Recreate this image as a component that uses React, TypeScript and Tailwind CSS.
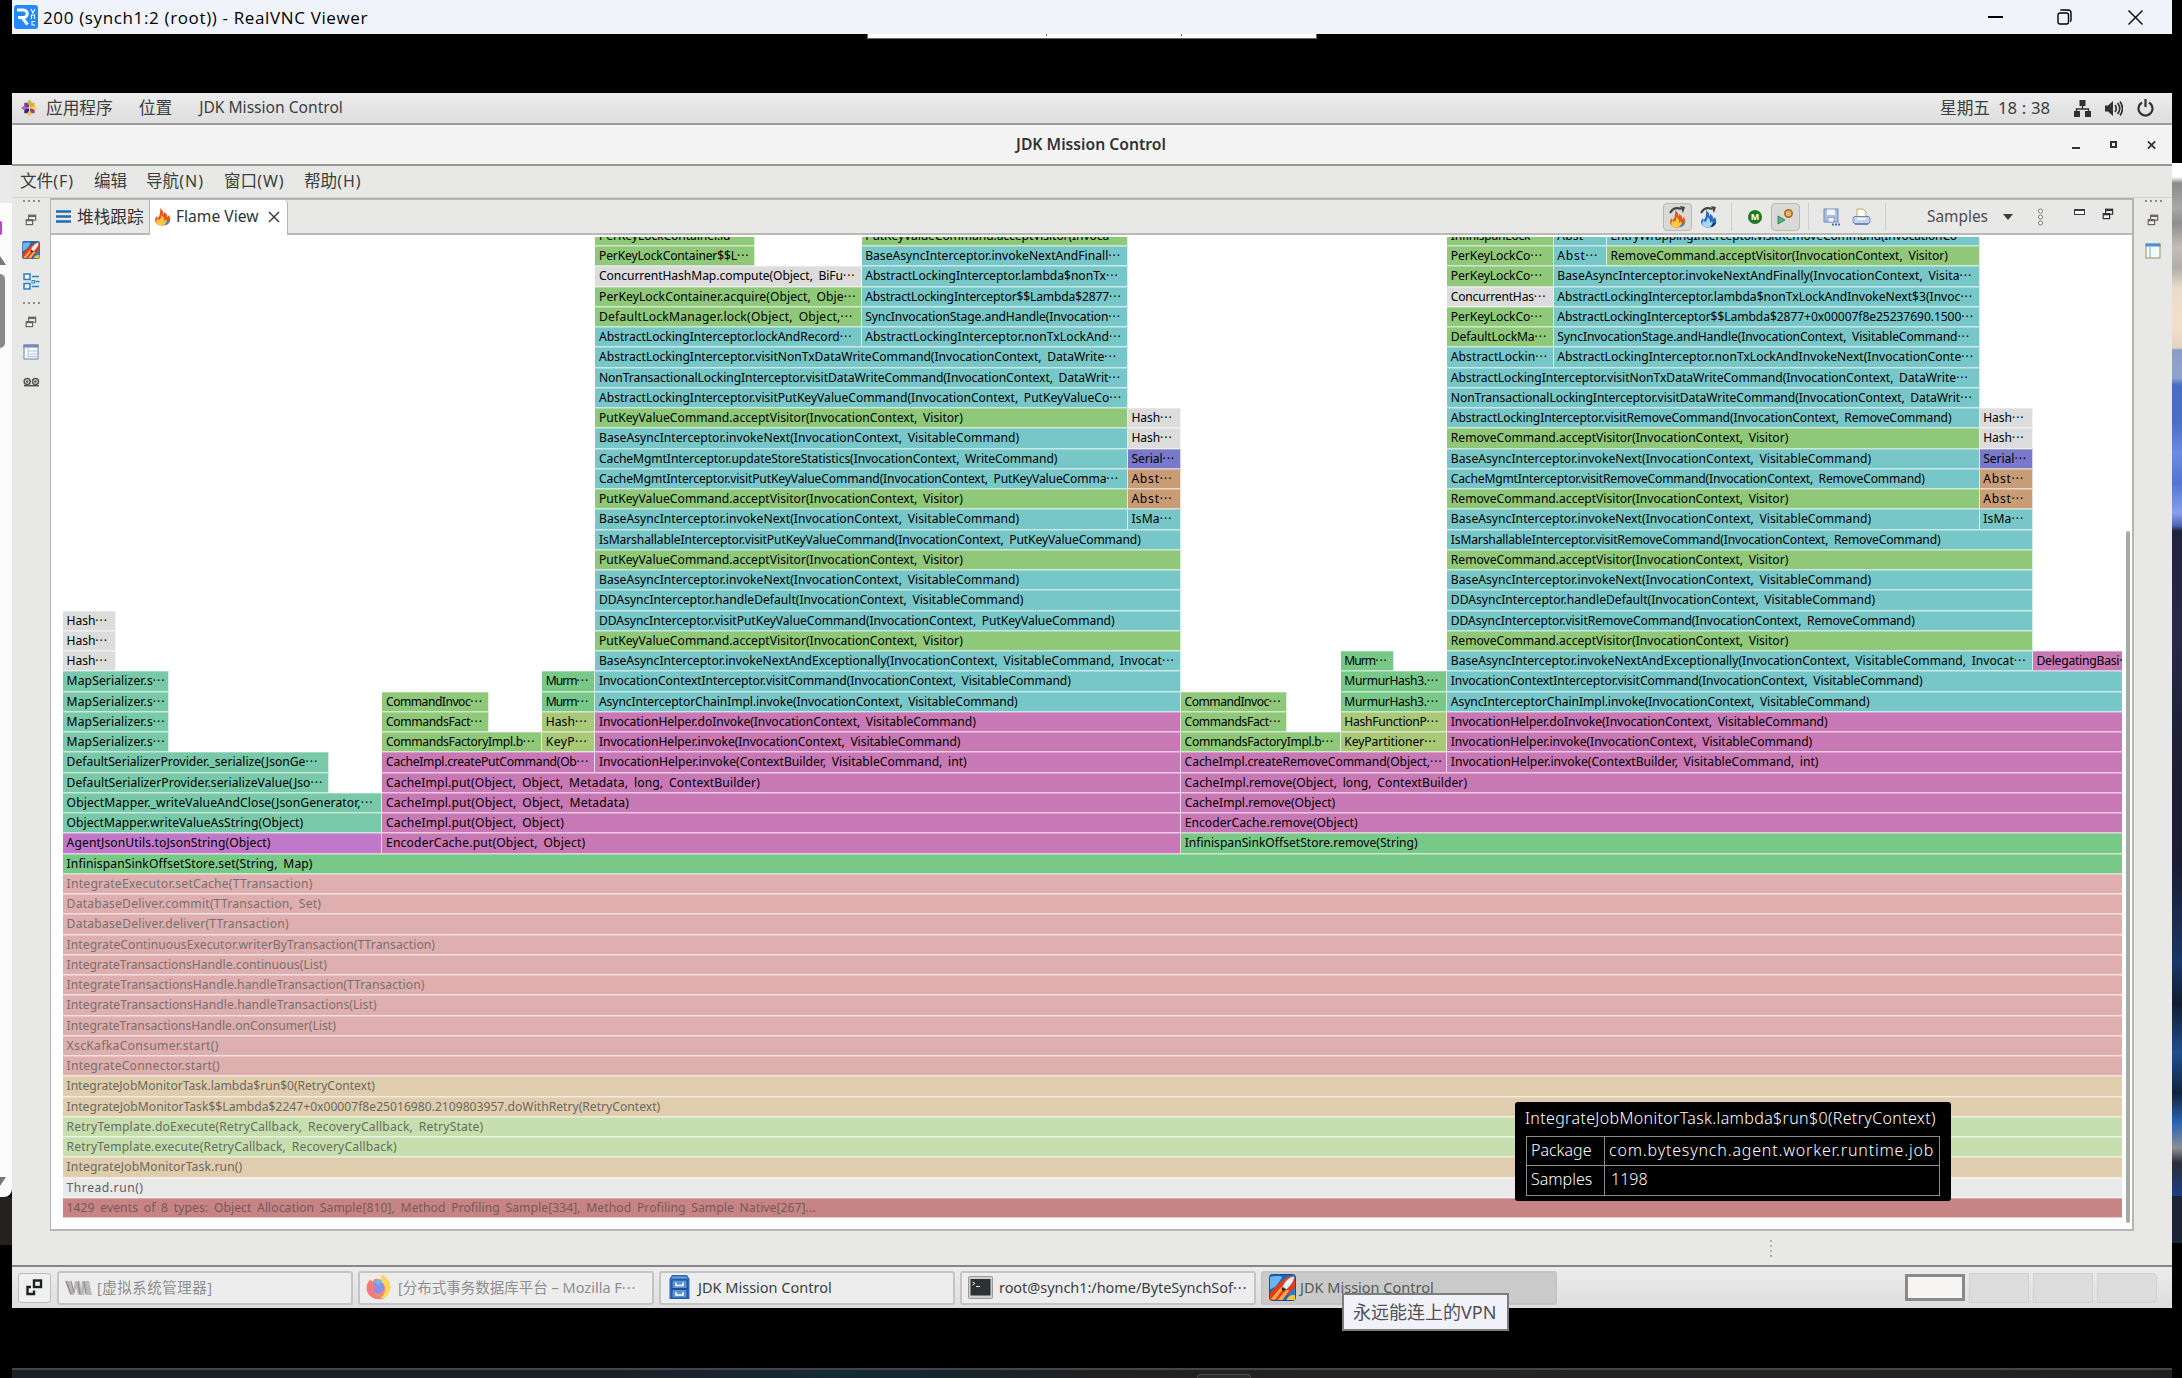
import React from 'react';

const UNIT = 53.24;

const tone = {
  g: 'bg-[#8ec878] text-black',
  t: 'bg-[#78c7c8] text-black',
  y: 'bg-[#dcdcdc] text-black',
  s: 'bg-[#7a78c8] text-black',
  o: 'bg-[#c89c74] text-black',
  m: 'bg-[#c878b4] text-black',
  n: 'bg-[#78c888] text-black',
  e: 'bg-[#78c8aa] text-black',
  l: 'bg-[#a9c878] text-black',
  v: 'bg-[#c278c8] text-black',
  P: 'bg-[#dfaeae] text-[#767070]',
  T: 'bg-[#dfcdae] text-[#6c6860]',
  G: 'bg-[#c7dfae] text-[#666c60]',
  W: 'bg-[#e9e9e9] text-[#606060]',
  R: 'bg-[#c88484] text-[#735a5a]',
} as const;

type Tone = keyof typeof tone;
// start column, column span, tone, label, label width in pixels
type Cell = [number, number, Tone, string, number];

const END = 40;
const full = (t: Tone, s: string, w: number): Cell[] => [[0, END, t, s, w]];

const PUT_ACCEPT = 'PutKeyValueCommand.acceptVisitor(InvocationContext, Visitor)';
const REMOVE_ACCEPT = 'RemoveCommand.acceptVisitor(InvocationContext, Visitor)';
const INVOKE_NEXT = 'BaseAsyncInterceptor.invokeNext(InvocationContext, VisitableCommand)';
const HANDLE_DEFAULT = 'DDAsyncInterceptor.handleDefault(InvocationContext, VisitableCommand)';
const EXCEPTIONALLY = 'BaseAsyncInterceptor.invokeNextAndExceptionally(InvocationContext, VisitableCommand, Invocat…';
const NON_TX = 'AbstractLockingInterceptor.visitNonTxDataWriteCommand(InvocationContext, DataWrite…';
const NON_TRANS = 'NonTransactionalLockingInterceptor.visitDataWriteCommand(InvocationContext, DataWrit…';
const VISIT = 'InvocationContextInterceptor.visitCommand(InvocationContext, VisitableCommand)';
const CHAIN = 'AsyncInterceptorChainImpl.invoke(InvocationContext, VisitableCommand)';
const DO_INVOKE = 'InvocationHelper.doInvoke(InvocationContext, VisitableCommand)';
const INVOKE = 'InvocationHelper.invoke(InvocationContext, VisitableCommand)';
const INVOKE_BUILDER = 'InvocationHelper.invoke(ContextBuilder, VisitableCommand, int)';

const rows: Cell[][] = [
  [
    [10, 3, 'g', 'PerKeyLockContainer.id', 131.500],
    [15, 5, 'g', 'PutKeyValueCommand.acceptVisitor(Invoca', 244],
    [26, 2, 'g', 'InfinispanLock', 79.500],
    [28, 1, 't', 'Abst', 26],
    [29, 7, 't', 'EntryWrappingInterceptor.visitRemoveCommand(InvocationCo', 346.500],
  ],
  [
    [10, 3, 'g', 'PerKeyLockContainer$$L…', 150.6],
    [15, 5, 't', 'BaseAsyncInterceptor.invokeNextAndFinall…', 255.8],
    [26, 2, 'g', 'PerKeyLockCo…', 92.1],
    [28, 1, 't', 'Abst…', 41],
    [29, 7, 'g', REMOVE_ACCEPT, 337.500],
  ],
  [
    [10, 5, 'y', 'ConcurrentHashMap.compute(Object, BiFu…', 256.6],
    [15, 5, 't', 'AbstractLockingInterceptor.lambda$nonTx…', 253.500],
    [26, 2, 'g', 'PerKeyLockCo…', 92.1],
    [28, 8, 't', 'BaseAsyncInterceptor.invokeNextAndFinally(InvocationContext, Visita…', 415],
  ],
  [
    [10, 5, 'g', 'PerKeyLockContainer.acquire(Object, Obje…', 257.4],
    [15, 5, 't', 'AbstractLockingInterceptor$$Lambda$2877…', 256.6],
    [26, 2, 'y', 'ConcurrentHas…', 95.7],
    [28, 8, 't', 'AbstractLockingInterceptor.lambda$nonTxLockAndInvokeNext$3(Invoc…', 415.8],
  ],
  [
    [10, 5, 'g', 'DefaultLockManager.lock(Object, Object,…', 254.2],
    [15, 5, 't', 'SyncInvocationStage.andHandle(Invocation…', 255.8],
    [26, 2, 'g', 'PerKeyLockCo…', 92.1],
    [28, 8, 't', 'AbstractLockingInterceptor$$Lambda$2877+0x00007f8e25237690.1500…', 416.7],
  ],
  [
    [10, 5, 't', 'AbstractLockingInterceptor.lockAndRecord…', 253.500],
    [15, 5, 't', 'AbstractLockingInterceptor.nonTxLockAnd…', 256.6],
    [26, 2, 'g', 'DefaultLockMa…', 96.4],
    [28, 8, 't', 'SyncInvocationStage.andHandle(InvocationContext, VisitableCommand…', 412.8],
  ],
  [
    [10, 10, 't', NON_TX, 518],
    [26, 2, 't', 'AbstractLockin…', 97.1],
    [28, 8, 't', 'AbstractLockingInterceptor.nonTxLockAndInvokeNext(InvocationConte…', 416.7],
  ],
  [
    [10, 10, 't', NON_TRANS, 522],
    [26, 10, 't', NON_TX, 518],
  ],
  [
    [10, 10, 't', 'AbstractLockingInterceptor.visitPutKeyValueCommand(InvocationContext, PutKeyValueCo…', 523],
    [26, 10, 't', NON_TRANS, 522],
  ],
  [
    [10, 10, 'g', PUT_ACCEPT, 363.8],
    [20, 1, 'y', 'Hash…', 41.4],
    [26, 10, 't', 'AbstractLockingInterceptor.visitRemoveCommand(InvocationContext, RemoveCommand)', 500.6],
    [36, 1, 'y', 'Hash…', 41.4],
  ],
  [
    [10, 10, 't', INVOKE_NEXT, 420.3],
    [20, 1, 'y', 'Hash…', 41.4],
    [26, 10, 'g', REMOVE_ACCEPT, 337.500],
    [36, 1, 'y', 'Hash…', 41.4],
  ],
  [
    [10, 10, 't', 'CacheMgmtInterceptor.updateStoreStatistics(InvocationContext, WriteCommand)', 458.3],
    [20, 1, 's', 'Serial…', 43.9],
    [26, 10, 't', INVOKE_NEXT, 420.3],
    [36, 1, 's', 'Serial…', 43.9],
  ],
  [
    [10, 10, 't', 'CacheMgmtInterceptor.visitPutKeyValueCommand(InvocationContext, PutKeyValueComma…', 520],
    [20, 1, 'o', 'Abst…', 41.1],
    [26, 10, 't', 'CacheMgmtInterceptor.visitRemoveCommand(InvocationContext, RemoveCommand)', 473.9],
    [36, 1, 'o', 'Abst…', 41.1],
  ],
  [
    [10, 10, 'g', PUT_ACCEPT, 363.8],
    [20, 1, 'o', 'Abst…', 41.1],
    [26, 10, 'g', REMOVE_ACCEPT, 337.500],
    [36, 1, 'o', 'Abst…', 41.1],
  ],
  [
    [10, 10, 't', INVOKE_NEXT, 420.3],
    [20, 1, 't', 'IsMa…', 41.1],
    [26, 10, 't', INVOKE_NEXT, 420.3],
    [36, 1, 't', 'IsMa…', 41.1],
  ],
  [
    [10, 11, 't', 'IsMarshallableInterceptor.visitPutKeyValueCommand(InvocationContext, PutKeyValueCommand)', 541.7],
    [26, 11, 't', 'IsMarshallableInterceptor.visitRemoveCommand(InvocationContext, RemoveCommand)', 489.6],
  ],
  [
    [10, 11, 'g', PUT_ACCEPT, 363.8],
    [26, 11, 'g', REMOVE_ACCEPT, 337.500],
  ],
  [
    [10, 11, 't', INVOKE_NEXT, 420.3],
    [26, 11, 't', INVOKE_NEXT, 420.3],
  ],
  [
    [10, 11, 't', HANDLE_DEFAULT, 424.3],
    [26, 11, 't', HANDLE_DEFAULT, 424.3],
  ],
  [
    [0, 1, 'y', 'Hash…', 41.4],
    [10, 11, 't', 'DDAsyncInterceptor.visitPutKeyValueCommand(InvocationContext, PutKeyValueCommand)', 515.6],
    [26, 11, 't', 'DDAsyncInterceptor.visitRemoveCommand(InvocationContext, RemoveCommand)', 463.9],
  ],
  [
    [0, 1, 'y', 'Hash…', 41.4],
    [10, 11, 'g', PUT_ACCEPT, 363.8],
    [26, 11, 'g', REMOVE_ACCEPT, 337.500],
  ],
  [
    [0, 1, 'y', 'Hash…', 41.4],
    [10, 11, 't', EXCEPTIONALLY, 575.7],
    [24, 1, 'n', 'Murm…', 43.500],
    [26, 11, 't', EXCEPTIONALLY, 575.7],
    [37, 3, 'm', 'DelegatingBasi…', 95.500],
  ],
  [
    [0, 2, 'e', 'MapSerializer.s…', 98.9],
    [9, 1, 'n', 'Murm…', 43.500],
    [10, 11, 't', VISIT, 471.7],
    [24, 2, 'n', 'MurmurHash3.…', 95],
    [26, 14, 't', VISIT, 471.7],
  ],
  [
    [0, 2, 'e', 'MapSerializer.s…', 98.9],
    [6, 2, 'g', 'CommandInvoc…', 96.9],
    [9, 1, 'n', 'Murm…', 43.500],
    [10, 11, 't', CHAIN, 418.7],
    [21, 2, 'g', 'CommandInvoc…', 96.9],
    [24, 2, 'n', 'MurmurHash3.…', 95],
    [26, 14, 't', CHAIN, 418.7],
  ],
  [
    [0, 2, 'e', 'MapSerializer.s…', 98.9],
    [6, 2, 'g', 'CommandsFact…', 97],
    [9, 1, 'l', 'Hash…', 42],
    [10, 11, 'm', DO_INVOKE, 376.8],
    [21, 2, 'g', 'CommandsFact…', 97],
    [24, 2, 'l', 'HashFunctionP…', 95],
    [26, 14, 'm', DO_INVOKE, 376.8],
  ],
  [
    [0, 2, 'e', 'MapSerializer.s…', 98.9],
    [6, 3, 'g', 'CommandsFactoryImpl.b…', 149.500],
    [9, 1, 'l', 'KeyP…', 42],
    [10, 11, 'm', INVOKE, 361.4],
    [21, 3, 'g', 'CommandsFactoryImpl.b…', 149.500],
    [24, 2, 'l', 'KeyPartitioner…', 92.500],
    [26, 14, 'm', INVOKE, 361.4],
  ],
  [
    [0, 5, 'e', 'DefaultSerializerProvider._serialize(JsonGe…', 251.500],
    [6, 4, 'm', 'CacheImpl.createPutCommand(Ob…', 203.2],
    [10, 11, 'm', INVOKE_BUILDER, 367.7],
    [21, 5, 'm', 'CacheImpl.createRemoveCommand(Object,…', 258],
    [26, 14, 'm', INVOKE_BUILDER, 367.7],
  ],
  [
    [0, 5, 'e', 'DefaultSerializerProvider.serializeValue(Jso…', 256.6],
    [6, 15, 'm', 'CacheImpl.put(Object, Object, Metadata, long, ContextBuilder)', 374],
    [21, 19, 'm', 'CacheImpl.remove(Object, long, ContextBuilder)', 282.500],
  ],
  [
    [0, 6, 'e', 'ObjectMapper._writeValueAndClose(JsonGenerator,…', 306.8],
    [6, 15, 'm', 'CacheImpl.put(Object, Object, Metadata)', 243],
    [21, 19, 'm', 'CacheImpl.remove(Object)', 150.500],
  ],
  [
    [0, 6, 'e', 'ObjectMapper.writeValueAsString(Object)', 236.500],
    [6, 15, 'm', 'CacheImpl.put(Object, Object)', 178],
    [21, 19, 'm', 'EncoderCache.remove(Object)', 173],
  ],
  [
    [0, 6, 'v', 'AgentJsonUtils.toJsonString(Object)', 204],
    [6, 15, 'm', 'EncoderCache.put(Object, Object)', 199.3],
    [21, 19, 'n', 'InfinispanSinkOffsetStore.remove(String)', 233],
  ],
  full('n', 'InfinispanSinkOffsetStore.set(String, Map)', 246),
  full('P', 'IntegrateExecutor.setCache(TTransaction)', 246),
  full('P', 'DatabaseDeliver.commit(TTransaction, Set)', 254.6),
  full('P', 'DatabaseDeliver.deliver(TTransaction)', 222.2),
  full('P', 'IntegrateContinuousExecutor.writerByTransaction(TTransaction)', 368.500),
  full('P', 'IntegrateTransactionsHandle.continuous(List)', 260.2),
  full('P', 'IntegrateTransactionsHandle.handleTransaction(TTransaction)', 357.8),
  full('P', 'IntegrateTransactionsHandle.handleTransactions(List)', 310),
  full('P', 'IntegrateTransactionsHandle.onConsumer(List)', 269.2),
  full('P', 'XscKafkaConsumer.start()', 152.1),
  full('P', 'IntegrateConnector.start()', 153.3),
  full('T', 'IntegrateJobMonitorTask.lambda$run$0(RetryContext)', 308.3),
  full('T', 'IntegrateJobMonitorTask$$Lambda$2247+0x00007f8e25016980.2109803957.doWithRetry(RetryContext)', 593.6),
  full('G', 'RetryTemplate.doExecute(RetryCallback, RecoveryCallback, RetryState)', 416.8),
  full('G', 'RetryTemplate.execute(RetryCallback, RecoveryCallback)', 330.1),
  full('T', 'IntegrateJobMonitorTask.run()', 175.7),
  full('W', 'Thread.run()', 76.9),
  full('R', '1429 events of 8 types: Object Allocation Sample[810], Method Profiling Sample[334], Method Profiling Sample Native[267]...', 749),
];

const ruler = document.createElement('canvas').getContext('2d')!;

// Letter spacing that sets a label to the given width at the frame font.
function spacing(text: string, width: number) {
  ruler.font = '12.1px "Noto Sans"';
  const cut = text.endsWith('…');
  const body = cut ? text.slice(0, -1) : text;
  const spaces = body.split(' ').length - 1;
  const natural = ruler.measureText(body).width + spaces * 2.5;
  return (width - (cut ? 12.7 : 0) - natural) / body.length;
}

function Dots() {
  return <span className="tracking-[1px]">···</span>;
}

function Label({ text }: { text: string }) {
  const cut = text.endsWith('…');
  return (
    <>
      {cut ? text.slice(0, -1) : text}
      {cut && <Dots />}
    </>
  );
}

function FlameRow({ cells }: { cells: Cell[] }) {
  return (
    <div className="flex h-[20.25px] shrink-0">
      {cells.map(([start, len, t, text, width], i) => {
        const prev = i ? cells[i - 1][0] + cells[i - 1][1] : 0;
        return (
          <div
            key={i}
            className={`shrink-0 overflow-hidden whitespace-pre border-r border-b border-t border-r-white/70 border-b-white/60 border-t-white/30 pl-[3.6px] text-[12.1px] leading-[18px] [word-spacing:2.5px] ${tone[t]}`}
            style={{
              width: len * UNIT,
              marginLeft: (start - prev) * UNIT,
              letterSpacing: spacing(text, width),
            }}
          >
            <Label text={text} />
          </div>
        );
      })}
    </div>
  );
}

function Restore({ dark }: { dark?: boolean }) {
  const c = dark ? '#2e3436' : '#6d6459';
  return (
    <svg width="12" height="12" viewBox="0 0 12 12" fill="#f5f5f3" stroke={c} strokeWidth="1.2">
      <rect x="3.6" y="1.2" width="7" height="5" />
      <path d="M3.6 2.2h7" strokeWidth="1.8" />
      <rect x="1.2" y="5.6" width="6.4" height="5" />
      <path d="M1.2 6.4h6.4" strokeWidth="1.8" />
    </svg>
  );
}

function Grip() {
  return (
    <div className="flex h-1 justify-center gap-[3px]">
      {[0, 1, 2, 3].map((i) => (
        <span key={i} className="h-[2px] w-[2px] bg-[#948a80]" />
      ))}
    </div>
  );
}

function Rocket({ size }: { size: [number, number] }) {
  return (
    <svg width={size[0]} height={size[1]} viewBox="0 0 28 28" preserveAspectRatio="none">
      <rect x=".5" y=".5" width="27" height="27" rx="3" fill="#1764c0" stroke="#174a8c" />
      <path d="M1 3q8-2 13 0L7 13 1 16z" fill="#6ab6f2" />
      <path d="M12 8 20 2l7 2v10l-6 6-8 7H1V20L8 12z" fill="#e23c1a" />
      <path d="M2 26 13 13l2 2L6 27zM9 27l9-11 3 1-7 10z" fill="#fba64a" />
      <path d="M22 19l5-5v13h-9z" fill="#2a7cd8" />
      <path d="M18 27q3-6 9-5v5z" fill="#f9c62f" />
      <path d="M14 13q4-9 12-11 1 6-8 14z" fill="#f0f0f0" stroke="#888" strokeWidth=".8" />
      <path d="M13 14l5 2-4 2z" fill="#222" />
    </svg>
  );
}

function Flame({ blue }: { blue?: boolean }) {
  const a = blue ? '#2368c4' : '#e8541c';
  const b = blue ? '#a8d4fa' : '#ffc83d';
  return (
    <svg width="17" height="19" viewBox="0 0 17 19">
      <path d="M6 1q4 3 3 7 1-1 1-3 4 2 3 5 1 0 2-2 3 6-1 9-6 3-11 0-4-4 0-8 0 2 1 2Q7 7 6 1z" fill={a} />
      <path d="M7 8q4 2 3 6 1 0 2-2 2 4-1 6-5 1-8-1Q1 14 4 11q0 2 1 2 3-2 2-5z" fill={b} />
      <path d="M10 18q5 0 6-5-1 1-3 1-1 2-3 4z" fill={blue ? '#12335f' : '#3b87c9'} />
    </svg>
  );
}

function SwirlFlame({ blue }: { blue?: boolean }) {
  return (
    <div className="relative h-[22px] w-[17px]">
      <div className="absolute top-[3px] left-0">
        <Flame blue={blue} />
      </div>
      <svg className="absolute top-0 left-0" width="17" height="9" viewBox="0 0 17 9">
        <path d="M1 7Q5 0 12 3" fill="none" stroke="#444" strokeWidth="2" />
        <path d="M11 0l5 1-2 6z" fill="#444" />
      </svg>
    </div>
  );
}

function TableIcon({ gold }: { gold?: boolean }) {
  return (
    <svg width="16" height="16" viewBox="0 0 16 16">
      <rect x="1" y="1" width="14" height="14" fill="#f4f8ff" stroke={gold ? '#a98d55' : '#6f7fa5'} />
      <rect x=".5" y=".5" width="15" height="3" fill={gold ? '#4a92d8' : '#7788b2'} />
      <path d={gold ? 'M5 4v11' : 'M5 4v11M5 7h10M5 10h10M5 12.500h10'} stroke={gold ? '#6fa9e0' : '#b9c4de'} />
    </svg>
  );
}

function LeftBar() {
  return (
    <div className="flex w-[38px] shrink-0 flex-col items-center">
      <div className="flex h-[19px] items-start pt-[2px]"><Grip /></div>
      <div className="mt-[-3px] flex h-3"><Restore /></div>
      <div className="mt-[15px]"><Rocket size={[18, 18]} /></div>
      <svg className="mt-[14px]" width="17" height="17" viewBox="0 0 17 17" fill="#e8f3fc" stroke="#2f7fc0" strokeWidth="1.500">
        <rect x="1" y="1" width="6" height="5.500" />
        <rect x="1" y="10.500" width="6" height="5.500" />
        <path d="M9 3.500h7M12.500 8.500h4M9 13.500h7" />
        <rect x="9" y="7.500" width="2.500" height="2.500" strokeWidth="1" />
      </svg>
      <div className="mt-[12px]"><Grip /></div>
      <div className="mt-[10px] h-3"><Restore /></div>
      <div className="mt-[16px]"><TableIcon /></div>
      <svg className="mt-[17px]" width="17" height="10" viewBox="0 0 17 10" fill="none" stroke="#555" strokeWidth="1.500">
        <circle cx="4.200" cy="4.500" r="3" />
        <circle cx="12.500" cy="4.500" r="3" />
        <circle cx="4.200" cy="4.500" r=".6" />
        <circle cx="12.500" cy="4.500" r=".6" />
        <path d="M1 8.700h15" />
      </svg>
    </div>
  );
}

function RightBar() {
  return (
    <div className="flex grow flex-col items-center">
      <div className="flex h-[16px] items-start pt-[2px]"><Grip /></div>
      <div className="h-3"><Restore /></div>
      <div className="mt-[17px]"><TableIcon gold /></div>
    </div>
  );
}

function Sep() {
  return <span className="h-7 w-px bg-[#cfcfcc]" />;
}

function TabStrip() {
  return (
    <div className="flex h-[35px] shrink-0 items-stretch border-b-2 border-[#b9b9b7] bg-[#e8e8e6] text-[15.6px] text-[#2e3436]">
      <div className="flex w-[99px] items-center border-r border-[#b5b5b3] pl-[5px]">
        <svg width="15" height="13" viewBox="0 0 15 13" stroke="#1f6cb0" strokeWidth="2.400">
          <path d="M0 1.500h15M0 6.500h15M0 11.500h15" />
        </svg>
        <span className="ml-[6px] text-[16.7px] whitespace-nowrap">堆栈跟踪</span>
      </div>
      <div className="mb-[-2px] flex w-[138px] items-center rounded-tr-sm border-r border-[#b5b5b3] bg-white pb-[2px] pl-[4px]">
        <Flame />
        <span className="ml-[5px] whitespace-nowrap">Flame View</span>
        <svg className="ml-[10px]" width="12" height="12" viewBox="0 0 12 12" stroke="#333" strokeWidth="1.400">
          <path d="M1 1l10 10M11 1L1 11" />
        </svg>
      </div>
      <div className="grow" />
      <div className="flex w-[469px] items-center">
        <div className="flex h-7 w-[29px] items-center justify-center rounded-sm border border-[#b8b8b5] bg-[#d9d9d6]"><SwirlFlame /></div>
        <div className="ml-[8px]"><SwirlFlame blue /></div>
        <div className="ml-[14px] flex"><Sep /></div>
        <div className="ml-[16px] flex h-[14px] w-[14px] items-center justify-center rounded-full bg-[#1d7a1d] text-[9px] font-bold text-white">M</div>
        <div className="ml-[9px] flex h-7 w-[29px] items-center justify-center rounded-sm border border-[#b8b8b5] bg-[#d9d9d6]">
          <svg width="17" height="17" viewBox="0 0 17 17">
            <path d="M1 8l7 4-7 4z" fill="#4fb37b" stroke="#2c8a55" />
            <circle cx="11.500" cy="5.500" r="3.600" fill="#f6cf8a" stroke="#b4671a" strokeWidth="1.800" />
            <circle cx="11.500" cy="5.500" r="1.300" fill="#fff" stroke="#b4671a" strokeWidth=".8" />
          </svg>
        </div>
        <div className="ml-[8px] flex"><Sep /></div>
        <svg className="ml-[14px]" width="18" height="18" viewBox="0 0 18 18">
          <rect x="1" y="1" width="14" height="13" fill="#a9bfe2" stroke="#6e88b8" />
          <rect x="4" y="1.500" width="8" height="5.500" fill="#eef3fb" />
          <rect x="5" y="9.500" width="6" height="4.500" fill="#eef3fb" stroke="#6e88b8" strokeWidth=".6" />
          <path d="M9 16.500h2M12 16.500h2M15 16.500h2" stroke="#4a70b8" strokeWidth="2" />
        </svg>
        <svg className="ml-[11px]" width="19" height="18" viewBox="0 0 19 18">
          <path d="M5 1h6l3 3v7H5z" fill="#fffdf5" stroke="#c6a35c" />
          <rect x="1" y="8.500" width="17" height="7" rx="2" fill="#c4d2ee" stroke="#6e88b8" />
          <path d="M3 16.500h13" stroke="#6e88b8" />
          <path d="M5 11h9" stroke="#fff" strokeWidth="1.500" />
        </svg>
        <div className="ml-[14px] flex"><Sep /></div>
        <span className="ml-[41px] text-[15.4px] text-[#4a4d4e]">Samples</span>
        <span className="ml-[15px] border-x-[5.5px] border-t-[6px] border-x-transparent border-t-[#3a3d3e]" />
        <svg className="ml-[24px]" width="7" height="18" viewBox="0 0 7 18" fill="#fff" stroke="#777">
          <circle cx="3.500" cy="3" r="2" />
          <circle cx="3.500" cy="9" r="2" />
          <circle cx="3.500" cy="15" r="2" />
        </svg>
        <span className="mb-[9px] ml-[30px] h-[6px] w-[11px] border border-t-2 border-[#3a3d3e] bg-white" />
        <div className="mb-[5px] ml-[17px]"><Restore dark /></div>
      </div>
    </div>
  );
}

function TopPanel() {
  return (
    <div className="flex h-8 shrink-0 items-center border-b-2 border-[#9a9a9a] bg-linear-to-b from-[#ececec] to-[#dedede] pl-[9px] text-[15.6px] text-[#3a3f41]">
      <svg width="17" height="18" viewBox="0 0 18 18">
        <rect x="3.500" y="3.500" width="5" height="5" fill="#8d2f86" />
        <rect x="9.500" y="3.500" width="5" height="5" fill="#f0a92c" />
        <rect x="3.500" y="9.500" width="5" height="5" fill="#2b2a78" />
        <rect x="9.500" y="9.500" width="5" height="5" fill="#a03a8c" />
        <path d="M9 0l2.500 3.500L9 7 6.500 3.500z" fill="#9fcb3b" />
        <path d="M9 18l2.500-3.500L9 11l-2.500 3.500z" fill="#efc14a" />
        <path d="M0 9l3.500-2.500L7 9l-3.500 2.500z" fill="#b560b0" />
        <path d="M18 9l-3.500-2.500L11 9l3.500 2.500z" fill="#e5e060" />
      </svg>
      <span className="ml-[8px] text-[16.7px]">应用程序</span>
      <span className="ml-[26px] text-[16.7px]">位置</span>
      <span className="ml-[27px]">JDK Mission Control</span>
      <span className="grow" />
      <span className="flex w-[110px] text-[16.7px] whitespace-nowrap">
        星期五<span className="ml-[8px]">18</span>
        <span className="w-[16px] text-center">:</span>38
      </span>
      <svg className="ml-[24px]" width="17" height="17" viewBox="0 0 17 17" fill="#2e3436">
        <path d="M5.500 0h6v6h-6zM0 11h6v6H0zM11 11h6v6h-6z" />
        <path d="M8.500 5v4M2.500 12V9h12v3" fill="none" stroke="#2e3436" strokeWidth="1.400" />
      </svg>
      <svg className="ml-[14px]" width="18" height="17" viewBox="0 0 18 17" fill="#2e3436">
        <path d="M0 5.500h3L8 1v15l-5-4.500H0z" />
        <path d="M10 5q2.500 3.500 0 7M12.500 3q4.500 5.500 0 11M15 1.500q5 7 0 14" fill="none" stroke="#2e3436" strokeWidth="1.700" />
      </svg>
      <svg className="mr-[18px] ml-[14px]" width="17" height="18" viewBox="0 0 17 18" fill="none" stroke="#2e3436" strokeWidth="2.200">
        <path d="M5 3.500a7 7 0 1 0 7 0M8.500 0v8" />
      </svg>
    </div>
  );
}

function TitleBar() {
  return (
    <div className="flex h-[41px] shrink-0 items-center border-b-2 border-[#989896] bg-[#f4f4f4]">
      <div className="w-[98px]" />
      <div className="grow text-center text-[15.7px] font-semibold text-[#2e3436]">JDK Mission Control</div>
      <div className="flex w-[100px] items-center justify-end">
        <span className="mt-[6px] h-[2px] w-[9px] bg-[#2e3436]" />
        <span className="ml-[30px] h-[7px] w-[7px] border-2 border-[#2e3436]" />
        <svg className="mr-[16px] ml-[30px]" width="10" height="10" viewBox="0 0 10 10" stroke="#2e3436" strokeWidth="2">
          <path d="M1 1l8 8M9 1L1 9" />
        </svg>
      </div>
    </div>
  );
}

const menus = [
  ['文件', '(F)', 'w-[74px]'],
  ['编辑', '', 'w-[52px]'],
  ['导航', '(N)', 'w-[78px]'],
  ['窗口', '(W)', 'w-[80px]'],
  ['帮助', '(H)', 'w-[70px]'],
];

function MenuBar() {
  return (
    <div className="flex h-[31px] shrink-0 items-center bg-[#e8e8e6] pl-[8px] text-[16.6px] text-[#3a3f41]">
      {menus.map(([a, b, w]) => (
        <div key={a} className={`shrink-0 whitespace-nowrap ${w}`}>
          {a}
          <span className="text-[16px] tracking-[1px]">{b}</span>
        </div>
      ))}
    </div>
  );
}

function Task({ icon, label, state }: { icon: React.ReactNode; label: React.ReactNode; state?: 'dim' | 'active' }) {
  const look =
    state === 'active'
      ? 'bg-[#cacaca] text-[#55595a]'
      : state === 'dim'
        ? 'bg-[#ededed] text-[#8c8e8f]'
        : 'bg-[#ededed] text-[#3a3f41]';
  return (
    <div className={`flex h-[34px] w-[296px] shrink-0 items-center rounded-[3px] border-2 border-[#c4c4c4] pl-[6px] text-[14.5px] whitespace-nowrap ${look}`}>
      {icon}
      {label}
    </div>
  );
}

function TaskBar() {
  return (
    <div className="flex h-[43px] shrink-0 items-center border-t-2 border-[#868686] bg-linear-to-b from-[#ececec] to-[#dedede] pl-[6px]">
      <div className="flex h-[30px] w-[33px] items-center justify-center rounded-[3px] border border-[#bdbdbd] bg-[#f0f0f0]">
        <svg width="17" height="17" viewBox="0 0 17 17" fill="none" stroke="#1c2022" strokeWidth="2.400">
          <rect x="8" y="1.500" width="7" height="6.500" />
          <path d="M5 8H1.500v7H8v-3.500" />
        </svg>
      </div>
      <div className="ml-[6px] flex gap-[5px]">
        <Task
          state="dim"
          icon={
            <svg className="mr-[5px]" width="27" height="16" viewBox="0 0 27 16">
              <path d="M0 1h5l3 9 2-9h5l1 9 1-9h7l3 14h-6l-1-8-1 8h-6l-2-7-2 7H5z" fill="#b9b9b9" />
              <path d="M1 1l5 13M6 1l3 12M13 2l2 12M19 2l2 12" fill="none" stroke="#928a8c" strokeWidth="1.200" />
            </svg>
          }
          label={<span className="tracking-[0.5px]">[虚拟系统管理器]</span>}
        />
        <Task
          state="dim"
          icon={
            <svg className="mr-[7px]" width="25" height="25" viewBox="0 0 25 25">
              <path d="M4 4Q-3 14 4 21q8 6 16 0 8-9 1-17Q17 0 16 0l-1 5Q8 2 7 6 4 7 4 4z" fill="#fb8c62" />
              <circle cx="12" cy="12.500" r="6.500" fill="#8a8fe8" />
              <path d="M16 0q10 6 8 15-2 9-11 9 7-4 6-12-1-4-5-6z" fill="#fdd65c" />
              <path d="M2 8Q-1 17 6 22q6 4 12 1-8 0-10-6-1-4 2-6-5-1-4-6z" fill="#f27a80" />
              <path d="M8 8q3-5 8-3-2 2-2 6-3-2-6-3z" fill="#6bb8ee" />
            </svg>
          }
          label={<span>[分布式事务数据库平台 – Mozilla F<Dots /></span>}
        />
        <Task
          icon={
            <svg className="mr-[8px] ml-[2px]" width="21" height="25" viewBox="0 0 21 25">
              <path d="M3 0h15l2.500 4v20H.5V4z" fill="#2f68b4" />
              <path d="M3.500 1.500h14l1 2h-16z" fill="#6aa0e2" />
              <rect x="3" y="5" width="15" height="8.500" fill="#5d93d8" stroke="#1d4f92" />
              <rect x="3" y="14.500" width="15" height="8.500" fill="#5d93d8" stroke="#1d4f92" />
              <path d="M7 7.500v3h7v-3M7 17v3h7v-3" fill="none" stroke="#fff" strokeWidth="1.500" />
            </svg>
          }
          label="JDK Mission Control"
        />
        <Task
          icon={
            <svg className="mr-[6px]" width="25" height="23" viewBox="0 0 25 23">
              <rect x=".5" y=".5" width="24" height="22" rx="1" fill="#cfcfcb" stroke="#9a9a96" />
              <rect x="2.500" y="3" width="20" height="16.500" fill="#2d3333" />
              <path d="M4.500 6l2.500 1.500L4.500 9M8 10.500h4" fill="none" stroke="#e8e8e8" />
            </svg>
          }
          label={<span className="tracking-[-0.05px]">root@synch1:/home/ByteSynchSof<Dots /></span>}
        />
        <Task state="active" icon={<div className="mr-[4px]"><Rocket size={[27, 27]} /></div>} label="JDK Mission Control" />
      </div>
      <div className="grow" />
      <div className="mr-[15px] flex items-center gap-[4px]">
        <div className="h-[27px] w-[60px] border-[3px] border-[#8a8a8a] bg-[#f6f5f3]" />
        <div className="h-[30px] w-[60px] border border-[#d0d0d0] bg-[#dcdcdc]" />
        <div className="h-[30px] w-[60px] border border-[#d0d0d0] bg-[#dcdcdc]" />
        <div className="h-[30px] w-[60px] rounded-r border border-[#d0d0d0] bg-[#dcdcdc]" />
      </div>
    </div>
  );
}

function Workbench() {
  return (
    <div className="flex h-[1034px] shrink-0 border-t border-[#d4d4d2] bg-[#e8e8e6]">
      <LeftBar />
      <div className="flex w-[2084px] shrink-0 flex-col border border-t-2 border-r-2 border-b-2 border-[#b5b5b3] bg-white">
        <TabStrip />
        <div className="flex min-h-0 grow pt-[2px] pb-[11px]">
          <div className="ml-[12px] flex w-[2059px] shrink-0 flex-col justify-end overflow-hidden">
            {rows.map((cells, i) => (
              <FlameRow key={i} cells={cells} />
            ))}
          </div>
          <div className="mt-[294px] mb-[-5px] ml-[4px] w-[4px] shrink-0 rounded-full bg-[#a5aaa9]" />
        </div>
      </div>
      <RightBar />
    </div>
  );
}

function ViewerTitle() {
  return (
    <div className="flex h-[34px] shrink-0 items-center bg-[#f0f3fa] pl-[2px] text-black">
      <svg width="24" height="24" viewBox="0 0 24 24">
        <rect width="24" height="24" rx="3" fill="#2289ff" />
        <path d="M3 5h6.500a3.500 3.500 0 0 1 0 7.500H4M8.500 13l5 6.500" fill="none" stroke="#fff" strokeWidth="3" />
        <path d="M17 4l2 4 2-4M17.500 14v-4h3v4M21 16.500h-3v3.500h3" fill="none" stroke="#fff" strokeWidth="1.100" />
      </svg>
      <span className="mt-[2px] ml-[5px] font-['Open_Sans','Noto_Sans',sans-serif] text-[17px] tracking-[0.64px]">200 (synch1:2 (root)) - RealVNC Viewer</span>
      <span className="grow" />
      <span className="h-[1.5px] w-[15px] bg-black" />
      <svg className="ml-[54px]" width="15" height="16" viewBox="0 0 15 16" fill="none" stroke="#000" strokeWidth="1.400">
        <rect x="1" y="4" width="10.500" height="11" rx="2" />
        <path d="M3.500 1.500q0-.5 1-.5H11q3 0 3 3v7q0 1-1 1.500" />
      </svg>
      <svg className="mr-[29px] ml-[56px]" width="15" height="15" viewBox="0 0 15 15" stroke="#000" strokeWidth="1.400">
        <path d="M.5.5l14 14M14.500.5l-14 14" />
      </svg>
    </div>
  );
}

function LeftEdge() {
  return (
    <div className="flex w-[12px] shrink-0 flex-col overflow-hidden pt-[165px]">
      <div className="h-[38px] shrink-0 bg-[#e9e9e9]" />
      <div className="flex h-[994px] shrink-0 flex-col items-start rounded-br-lg bg-[#fbfbfb]">
        <span className="mt-[18px] h-[14px] w-[2px] rounded-r bg-[#c03fd0]" />
        <span className="mt-[21px] border-r-[6px] border-b-[9px] border-r-transparent border-b-[#777]" />
        <span className="mt-[9px] h-[74px] w-[5px] rounded-r-full bg-[#8a8a8a]" />
        <span className="grow" />
        <span className="mb-[11px] border-t-[9px] border-r-[6px] border-t-[#777] border-r-transparent" />
      </div>
      <div className="h-[48px] shrink-0 bg-[#25211f]" />
    </div>
  );
}

function RightEdge() {
  return (
    <div className="flex w-[10px] shrink-0 flex-col pt-[163px]">
      <div className="h-[1033px] bg-[linear-gradient(to_bottom,#fff_0,#fff_14px,#8b8b8c_20px,#a9a8a7_45px,#8f8f90_60px,#c4bdb6_85px,#b0aca8_105px,#eadccb_125px,#f3dfc8_165px,#e2d2c4_185px,#8a9cc6_187px,#8fa3cf_215px,#456dc0_222px,#4a70c6_260px,#6c8ae0_290px,#5275d2_320px,#87a0ea_350px,#4a62b0_363px,#20233e_368px,#262a48_470px,#1a1f36_600px,#171c34_700px,#1c2c50_760px,#173868_800px,#131c30_840px,#1f4f8c_890px,#10233f_930px,#2a64b0_960px,#8a8f96_985px,#2a2c38_1000px,#1c3f80_1032px)]" />
      <div className="h-[47px] bg-[#1b2436]" />
    </div>
  );
}

export default function App() {
  return (
    <div className="relative flex h-[1378px] w-[2182px] overflow-hidden bg-black font-['Noto_Sans','Noto_Sans_CJK_SC',sans-serif]">
      <LeftEdge />
      <div className="flex w-[2160px] shrink-0 flex-col">
        <ViewerTitle />
        <div className="flex h-[59px] shrink-0 items-start pl-[855px]">
          <div className="flex h-[5px] w-[450px] border border-t-0 border-[#666] bg-white">
            <span className="ml-[178px] h-[2px] w-px bg-[#555]" />
            <span className="ml-[134px] h-[2px] w-px bg-[#555]" />
          </div>
        </div>
        <TopPanel />
        <TitleBar />
        <MenuBar />
        <Workbench />
        <div className="flex h-[34px] shrink-0 flex-col gap-[3px] bg-[#e8e8e6] pt-[9px] pl-[1758px]">
          {[0, 1, 2, 3].map((i) => (
            <span key={i} className="h-[2px] w-[2px] shrink-0 bg-[#b5aca3]" />
          ))}
        </div>
        <TaskBar />
        <div className="h-[60px] shrink-0" />
        <div className="flex h-[10px] shrink-0 border-t-2 border-[#45464a] bg-[linear-gradient(to_right,#1d1f28_0,#1d1f28_28%,#152a35_38%,#14262f_42%,#211f20_50%,#262324_70%,#1f1f22_100%)] pl-[1185px]">
          <span className="mt-[4px] h-[4px] w-[54px] shrink-0 rounded-t-md border border-b-0 border-[#4c4c4c] bg-[#2b2b2b]" />
        </div>
      </div>
      <RightEdge />

      <div className="absolute top-[1102px] left-[1515px] h-[99px] w-[436px] rounded-[3px] bg-black pt-[4px] pr-[11px] pl-[10px] text-[16px] font-light text-white">
        <div className="h-[30px] leading-[25px] tracking-[0.35px] whitespace-nowrap">IntegrateJobMonitorTask.lambda$run$0(RetryContext)</div>
        <div className="ml-px grid h-[60px] grid-cols-[78px_1fr] grid-rows-2 border border-[#8c8c8c] leading-[27px]">
          <div className="border-r border-b border-[#8c8c8c] pl-[4px]">Package</div>
          <div className="border-b border-[#8c8c8c] pl-[4px] tracking-[0.82px] whitespace-nowrap">com.bytesynch.agent.worker.runtime.job</div>
          <div className="border-r border-[#8c8c8c] pl-[4px]">Samples</div>
          <div className="pl-[6px]">1198</div>
        </div>
      </div>

      <div className="absolute top-[1293px] left-[1342px] flex h-[38px] w-[167px] items-center border-2 border-[#7d7d80] bg-[#f1f2f9] pl-[9px] text-[18px] whitespace-nowrap text-[#505055]">
        永远能连上的VPN
      </div>
    </div>
  );
}
